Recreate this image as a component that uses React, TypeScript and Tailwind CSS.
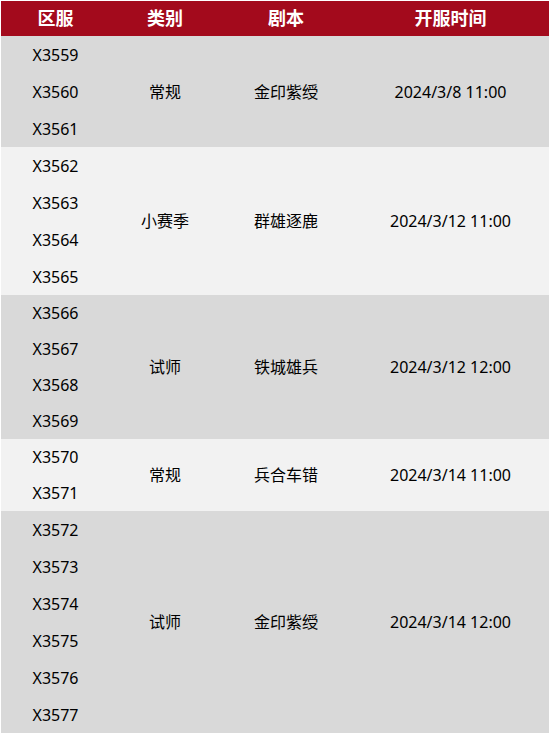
const groups = [
  { servers: ["X3559", "X3560", "X3561"], type: "常规", script: "金印紫绶", time: "2024/3/8 11:00", rowH: "h-[37px]", bg: "bg-[#d9d9d9]" },
  { servers: ["X3562", "X3563", "X3564", "X3565"], type: "小赛季", script: "群雄逐鹿", time: "2024/3/12 11:00", rowH: "h-[37px]", bg: "bg-[#f2f2f2]" },
  { servers: ["X3566", "X3567", "X3568", "X3569"], type: "试师", script: "铁城雄兵", time: "2024/3/12 12:00", rowH: "h-[36px]", bg: "bg-[#d9d9d9]" },
  { servers: ["X3570", "X3571"], type: "常规", script: "兵合车错", time: "2024/3/14 11:00", rowH: "h-[36px]", bg: "bg-[#f2f2f2]" },
  { servers: ["X3572", "X3573", "X3574", "X3575", "X3576", "X3577"], type: "试师", script: "金印紫绶", time: "2024/3/14 12:00", rowH: "h-[37px]", bg: "bg-[#d9d9d9]" },
]

export default function App() {
  return (
    <div className="w-[549px] bg-white pl-px pt-px font-['Noto_Sans','Noto_Sans_CJK_SC',sans-serif] text-[16px] text-black">
      <div className="flex h-[35px] items-center bg-[#a30a1c] text-[18px] font-bold text-white">
        <div className="w-[109px] text-center">区服</div>
        <div className="w-[110px] text-center">类别</div>
        <div className="w-[132px] text-center">剧本</div>
        <div className="w-[197px] text-center">开服时间</div>
      </div>
      {groups.map((g) => (
        <div key={g.servers[0]} className={`flex ${g.bg}`}>
          <div className="w-[109px]">
            {g.servers.map((s) => (
              <div key={s} className={`flex ${g.rowH} items-center justify-center`}>
                {s}
              </div>
            ))}
          </div>
          <div className="flex w-[110px] items-center justify-center">{g.type}</div>
          <div className="flex w-[132px] items-center justify-center">{g.script}</div>
          <div className="flex w-[197px] items-center justify-center">{g.time}</div>
        </div>
      ))}
    </div>
  )
}
